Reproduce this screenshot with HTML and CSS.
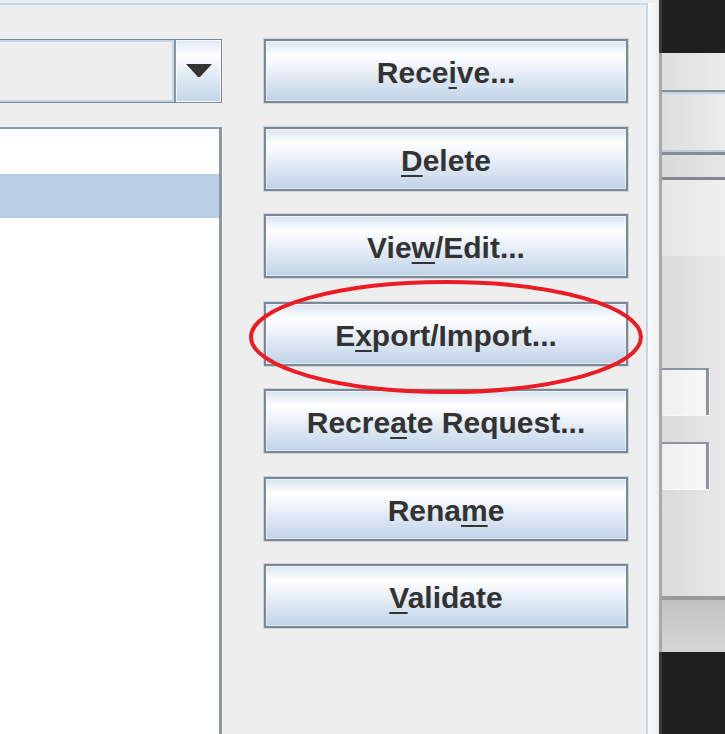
FILE: index.html
```html
<!DOCTYPE html>
<html>
<head>
<meta charset="utf-8">
<link rel="stylesheet" href="styles.css">
</head>
<body>
<div class="screen">
  <div class="dialog">
    <div class="panel">
      <div class="left-col">
        <div class="combo">
          <div class="combo-field"></div>
          <div class="combo-btn">
            <svg width="26" height="14" viewBox="0 0 26 14"><path d="M0 0 H26 L14 13 H12 Z" fill="#333"/></svg>
          </div>
        </div>
        <div class="list">
          <div class="row"></div>
          <div class="row selected"></div>
        </div>
      </div>
      <div class="buttons">
        <button class="btn">Rece<u>i</u>ve...</button>
        <button class="btn"><u>D</u>elete</button>
        <button class="btn">Vie<u>w</u>/Edit...</button>
        <button class="btn">E<u>x</u>port/Import...</button>
        <button class="btn">Recre<u>a</u>te Request...</button>
        <button class="btn">Rena<u>m</u>e</button>
        <button class="btn"><u>V</u>alidate</button>
      </div>
    </div>
    <div class="edge"></div>
    <svg class="highlight" width="400" height="118" viewBox="0 0 400 118">
      <ellipse cx="200" cy="58" rx="195" ry="55" fill="none" stroke="#ec1c24" stroke-width="4"/>
    </svg>
  </div>
  <div class="backdrop">
    <div class="bd-dark-top"></div>
    <div class="bd-a"></div>
    <div class="bd-line1"></div>
    <div class="bd-b"></div>
    <div class="bd-line2"></div>
    <div class="bd-c"></div>
    <div class="bd-line3"></div>
    <div class="bd-d"></div>
    <div class="bd-e">
      <div class="tf"></div>
      <div class="tf"></div>
    </div>
    <div class="bd-line4"></div>
    <div class="bd-f"></div>
    <div class="bd-dark-bottom"></div>
  </div>
</div>
</body>
</html>
```
FILE: styles.css
```css
html, body {
  margin: 0;
  padding: 0;
  width: 725px;
  height: 734px;
  overflow: hidden;
  background: #202020;
}
.screen {
  display: flex;
  width: 725px;
  height: 734px;
  font-family: "Liberation Sans", Arial, sans-serif;
}
.dialog {
  position: relative;
  display: flex;
  width: 659px;
  height: 734px;
  background: #eeeeee;
  padding-top: 3px;
  box-sizing: border-box;
}
.panel {
  display: flex;
  width: 648px;
  height: 731px;
  box-sizing: border-box;
  border-top: 2px solid #c9daec;
  border-right: 2px solid #c3d6eb;
  padding-top: 34px;
  gap: 42px;
  overflow: hidden;
}
.edge {
  width: 11px;
  background: linear-gradient(to right, #fbfbfb, #f3f3f3 60%, #ececec);
}
.left-col {
  display: flex;
  flex-direction: column;
  gap: 24px;
  width: 226px;
  margin-left: -4px;
  flex: none;
}
.combo {
  display: flex;
  height: 64px;
  box-sizing: border-box;
  border: 1px solid #7d8997;
}
.combo-field {
  flex: 1;
  background: #eeeeee;
  box-shadow: inset 0 0 0 2px #c2d6ea;
  border-right: 2px solid #8894a2;
}
.combo-btn {
  width: 45px;
  display: flex;
  align-items: center;
  justify-content: center;
  background: linear-gradient(#dde8f3 0%, #ffffff 25%, #e4edf6 55%, #c1d4e8 100%);
  box-shadow: inset 0 0 0 1px #f5f9fc;
}
.list {
  flex: 1;
  background: #ffffff;
  border-top: 2px solid #8e99a6;
  border-right: 3px solid #8b96a3;
  box-shadow: 1px 0 0 #f4f8fc;
  padding-top: 1px;
}
.row {
  height: 44px;
}
.row.selected {
  background: #b8cfe5;
}
.buttons {
  display: flex;
  flex-direction: column;
  gap: 23.5px;
  width: 364px;
  flex: none;
}
.btn {
  height: 64px;
  width: 364px;
  box-sizing: border-box;
  border: 2px solid #7c8896;
  box-shadow: 0 0 0 1px rgba(175, 185, 195, 0.5), inset 0 0 0 1px rgba(255, 255, 255, 0.5);
  background: linear-gradient(#d9e5f1 0%, #ffffff 24%, #e5edf6 55%, #c0d3e7 100%);
  font-family: "Liberation Sans", Arial, sans-serif;
  font-weight: bold;
  font-size: 30px;
  color: #333333;
  padding: 4px 0 0 0;
  margin: 0;
  line-height: 1;
}
.btn u {
  text-decoration-thickness: 2px;
  text-underline-offset: 4px;
}
.highlight {
  position: absolute;
  left: 246px;
  top: 279px;
}
.backdrop {
  width: 66px;
  height: 734px;
  display: flex;
  flex-direction: column;
  border-left: 3px solid #a8a8a8;
  box-sizing: border-box;
}
.bd-dark-top {
  height: 53px;
  background: #202020;
  margin-left: -3px;
  border-left: 3px solid #3a3a3a;
}
.bd-a {
  height: 37px;
  background: linear-gradient(to right, #dedede, #ebebeb);
}
.bd-line1 {
  height: 4px;
  background: linear-gradient(#878d95 0 50%, #c3d4e6 50%);
}
.bd-b {
  height: 56px;
  background: linear-gradient(to right, #dddddd, #ececec);
}
.bd-line2 {
  height: 5px;
  background: linear-gradient(#bccee2 0 50%, #868c94 50%);
}
.bd-c {
  height: 22px;
  background: linear-gradient(to right, #d9d9d9, #e6e6e6);
}
.bd-line3 {
  height: 3px;
  background: #85888c;
}
.bd-d {
  height: 76px;
  background: linear-gradient(to right, #e6e6e6, #efefef);
}
.bd-e {
  height: 340px;
  display: flex;
  flex-direction: column;
  gap: 27px;
  padding-top: 112px;
  box-sizing: border-box;
  background: linear-gradient(to right, #dadada, #e8e8e8);
}
.tf {
  width: 47px;
  height: 47px;
  box-sizing: border-box;
  border-top: 2px solid #8d949d;
  border-right: 3px solid #8d949d;
  background: linear-gradient(to right, #efefef, #f8f8f8);
  box-shadow: 1px 1px 0 #f7f7f7;
}
.bd-line4 {
  height: 4px;
  background: #999999;
}
.bd-f {
  height: 52px;
  background: linear-gradient(#c2c2c2, #d6d6d6);
}
.bd-dark-bottom {
  flex: 1;
  background: #202020;
  margin-left: -3px;
  border-left: 3px solid #3a3a3a;
}
```
